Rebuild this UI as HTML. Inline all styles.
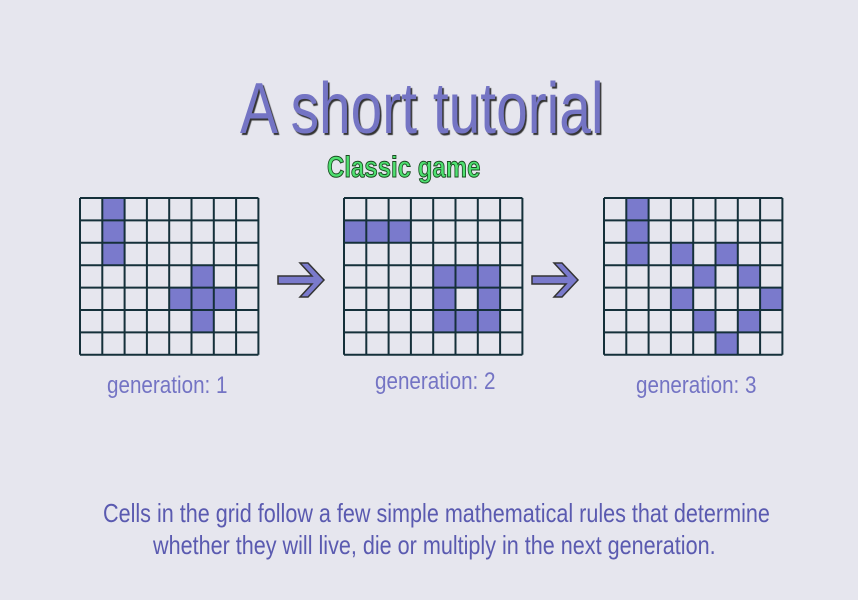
<html><head><style>
body{margin:0;width:858px;height:600px;background:#e6e6ee;position:relative;overflow:hidden;font-family:"Liberation Sans",sans-serif}
.t{position:absolute;white-space:nowrap;transform-origin:0 0}
svg{position:absolute;left:0;top:0}
</style></head><body>
<div class="t" style="left:240px;top:68px;font-size:72px;color:#7474c4;text-shadow:2px 2px 1px #333;transform:scaleX(0.79)">A short tutorial</div>
<div class="t" style="left:327px;top:151px;font-size:30px;font-weight:bold;color:#4ee070;-webkit-text-stroke:1px #1a4a20;transform:scaleX(0.8)">Classic game</div>
<div class="t" style="left:107px;top:372px;font-size:24px;color:#7474c4;transform:scaleX(0.86)">generation: 1</div>
<div class="t" style="left:375px;top:368px;font-size:24px;color:#7474c4;transform:scaleX(0.86)">generation: 2</div>
<div class="t" style="left:636px;top:372px;font-size:24px;color:#7474c4;transform:scaleX(0.86)">generation: 3</div>
<div class="t" style="left:103px;top:498px;font-size:26px;color:#5a5ab0;transform:scaleX(0.83)">Cells in the grid follow a few simple mathematical rules that determine</div>
<div class="t" style="left:153px;top:530px;font-size:26px;color:#5a5ab0;transform:scaleX(0.83)">whether they will live, die or multiply in the next generation.</div>
<svg width="858" height="600" id="s"></svg>
<script>
var s=document.getElementById('s'),h='';
function g(x,y,cells){var w=22.3,hh=22.4;
cells.forEach(function(c){h+='<rect x="'+(x+c[1]*w)+'" y="'+(y+c[0]*hh)+'" width="'+w+'" height="'+hh+'" fill="#7a7acc"/>';});
for(var i=0;i<=8;i++)h+='<line x1="'+(x+i*w)+'" y1="'+y+'" x2="'+(x+i*w)+'" y2="'+(y+7*hh)+'" stroke="#15303a" stroke-width="2"/>';
for(var j=0;j<=7;j++)h+='<line x1="'+x+'" y1="'+(y+j*hh)+'" x2="'+(x+8*w)+'" y2="'+(y+j*hh)+'" stroke="#15303a" stroke-width="2"/>';}
g(80,198,[[0,1],[1,1],[2,1],[3,5],[4,4],[4,5],[4,6],[5,5]]);
g(344,198,[[1,0],[1,1],[1,2],[3,4],[3,5],[3,6],[4,4],[4,6],[5,4],[5,5],[5,6]]);
g(604,198,[[0,1],[1,1],[2,1],[2,3],[2,5],[3,4],[3,6],[4,3],[4,7],[5,4],[5,6],[6,5]]);
function a(x){h+='<path d="M'+x+' 276h34l-12-13h8l16 17-16 17h-8l12-13h-34z" fill="#7a7acc" stroke="#333" stroke-width="1.5"/>';}
a(278);a(532);
s.innerHTML=h;
</script>
</body></html>
